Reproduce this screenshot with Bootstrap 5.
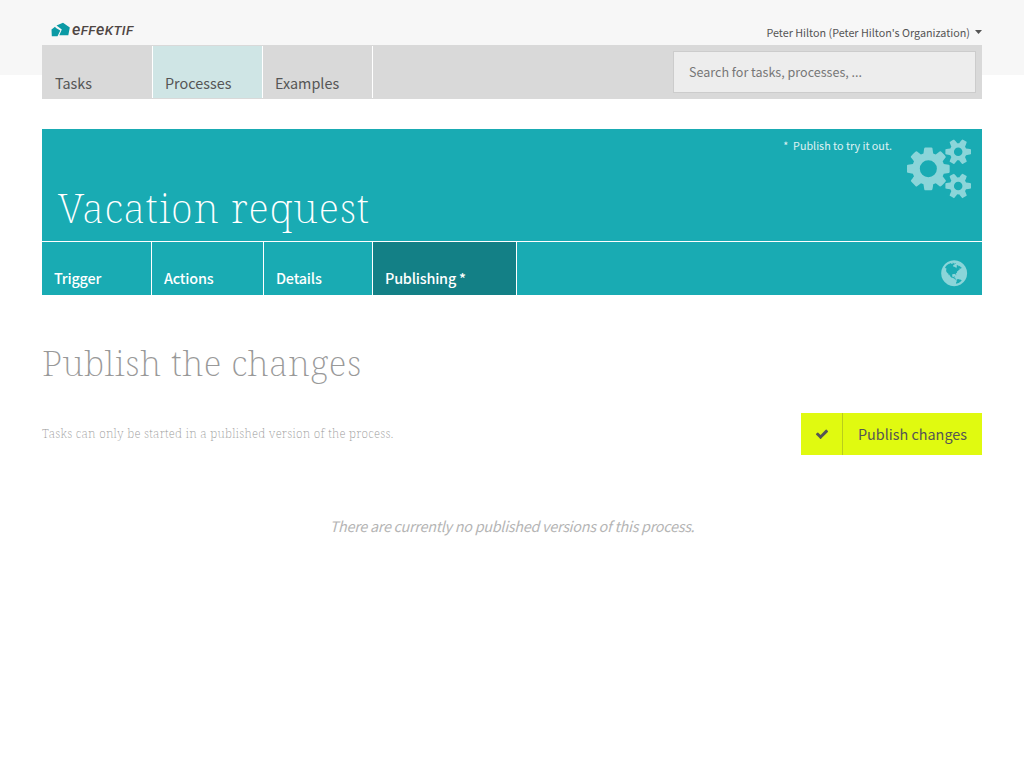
<!DOCTYPE html>
<html lang="en">
<head>
<meta charset="utf-8">
<meta name="viewport" content="width=device-width, initial-scale=1">
<title>Vacation request</title>
<link href="https://cdn.jsdelivr.net/npm/bootstrap@5.3.0/dist/css/bootstrap.min.css" rel="stylesheet">
<style>
body{font-family:"Noto Sans CJK SC",sans-serif;color:#555;background:#fff;overflow:hidden}
.page-top{background:linear-gradient(#f7f7f7 75px,#fff 75px)}
.wrap{width:940px;margin:0 auto}
.masthead{height:45px}
.brand-mark{padding-left:9px;padding-top:22px}
.brand-text{font:italic 500 13.5px/16px Roboto,sans-serif;color:#4f4644;letter-spacing:.42px;padding-left:1px}
.brand-text .low{font-size:16px}
.brand-text .up{text-transform:uppercase}
.user{font-size:10.78px;line-height:16px;padding-top:24px}
.user svg{margin-left:5px}
.main-nav{height:54px;background:#d9d9d9;padding:1px 0}
.main-nav a{width:110px;padding:28px 0 0 12px;border-right:1px solid #fff;font-size:14.4px;line-height:18px;color:#555;text-decoration:none}
.main-nav a:first-child{width:111px;padding-left:13px}
.main-nav a.current{background:#cfe5e5}
.search{width:303px;height:42px;margin:5px 6px 0 0;border:1px solid #ccc;background:#ededed;border-radius:0;padding:0 15px 2px;font-size:12.55px}
.search::placeholder{color:#777}
.banner{margin-top:30px;background:#19abb3;color:#fff}
.banner-head{height:112px}
.slab{font-family:"Noto Serif",Roboto,serif;font-weight:200;white-space:nowrap}
.banner h1{font-size:40px;letter-spacing:.92px;line-height:50px;margin:0;padding:54px 0 0 16px;font-weight:200}
.hint{font-size:10.75px;line-height:16px;padding-top:9px;opacity:.85}
.gears{margin:10px 11px 0 15px}
.tabs{height:54px;border-top:1px solid #fff}
.tabs a{width:110px;border-right:1px solid #fff;padding:27px 0 0 12px;font-size:14.4px;letter-spacing:-.2px;line-height:18px;font-weight:500;color:#fff;text-decoration:none}
.tabs a.tab-actions{width:112px}
.tabs a.tab-details{width:109px}
.tabs a.current{width:144px;background:#138086}
.globe{margin:16px 13px 0 auto}
h2.slab{font-size:35px;letter-spacing:.45px;line-height:46px;color:#999;margin:45px 0 27px}
.note{font-size:12px;letter-spacing:.24px;line-height:18px;color:#999}
.publish{width:181px;height:42px;background:#e0fa10;border:0;color:#555;padding:0;font-size:14.4px}
.publish .tick{width:42px;height:42px;border-right:1px solid #b9cd1c}
.empty{margin-top:61px;font-size:14.4px;letter-spacing:-.28px;line-height:20px;font-style:italic;color:#b5b5b5}
</style>
</head>
<body>
<div class="page-top">
 <div class="wrap">
  <header class="masthead d-flex justify-content-between">
   <div class="brand-mark d-flex align-items-start">
    <svg width="20" height="15" viewBox="0 0 20 15"><path fill="#0b9aa5" d="M.5 7.500 4 4.800 5 6l4.300 2.500L6.500 14.300H.8zM5.500 3.500 12 .700 18.800 5.500 17.300 13.300H8.300L10.800 7.600z"/></svg>
    <span class="brand-text"><span class="low">e</span><span class="up">ff</span><span class="low">e</span><span class="up">ktif</span></span>
   </div>
   <div class="user d-flex align-items-center align-self-start"><span>Peter Hilton (Peter Hilton's Organization)</span><svg width="7" height="4"><path fill="#555" d="M0 0h7L3.500 4z"/></svg></div>
  </header>
  <nav class="main-nav d-flex">
   <a href="#">Tasks</a><a href="#" class="current">Processes</a><a href="#">Examples</a>
   <input class="search form-control ms-auto" placeholder="Search for tasks, processes, ...">
  </nav>
 </div>
</div>
<main class="wrap">
 <section class="banner">
  <div class="banner-head d-flex">
   <h1 class="slab me-auto">Vacation request</h1>
   <div class="hint">*&nbsp; Publish to try it out.</div>
   <svg class="gears" width="64" height="59.7" viewBox="0 0 1920 1792"><path fill="#8bd5d9" d="M896 896q0-106-75-181t-181-75-181 75-75 181 75 181 181 75 181-75 75-181zm768 512q0-52-38-90t-90-38-90 38-38 90q0 53 37.500 90.500t90.500 37.500 90.500-37.500 37.500-90.500zm0-1024q0-52-38-90t-90-38-90 38-38 90q0 53 37.500 90.500t90.500 37.500 90.500-37.500 37.500-90.500zm-384 421v185q0 10-7 19.500t-16 10.500l-155 24q-11 35-32 76 34 48 90 115 7 11 7 20 0 12-7 19-23 30-82.500 89.500t-78.500 59.500q-11 0-21-7l-115-90q-37 19-77 31-11 108-23 155-7 24-30 24h-186q-11 0-20-7.500t-10-17.500l-23-153q-34-10-75-31l-118 89q-7 7-20 7-11 0-21-8-144-133-144-160 0-9 7-19 10-14 41-53t47-61q-23-44-35-82l-152-24q-10-1-17-9.500t-7-19.500v-185q0-10 7-19.500t16-10.500l155-24q11-35 32-76-34-48-90-115-7-11-7-20 0-12 7-20 22-30 82-89t79-59q11 0 21 7l115 90q34-18 77-32 11-108 23-154 7-24 30-24h186q11 0 20 7.500t10 17.500l23 153q34 10 75 31l118-89q8-7 20-7 11 0 21 8 144 133 144 160 0 8-7 19-12 16-42 54t-45 60q23 48 34 82l152 23q10 2 17 10.500t7 19.500zm640 533v140q0 16-149 31-12 27-30 52 51 113 51 138 0 4-4 7-122 71-124 71-8 0-46-47t-52-68q-20 2-30 2t-30-2q-14 21-52 68t-46 47q-2 0-124-71-4-3-4-7 0-25 51-138-18-25-30-52-149-15-149-31v-140q0-16 149-31 13-29 30-52-51-113-51-138 0-4 4-7 4-2 35-20t59-34 30-16q8 0 46 46.500t52 67.500q20-2 30-2t30 2q51-71 92-112l6-2q4 0 124 70 4 3 4 7 0 25-51 138 17 23 30 52 149 15 149 31zm0-1024v140q0 16-149 31-12 27-30 52 51 113 51 138 0 4-4 7-122 71-124 71-8 0-46-47t-52-68q-20 2-30 2t-30-2q-14 21-52 68t-46 47q-2 0-124-71-4-3-4-7 0-25 51-138-18-25-30-52-149-15-149-31v-140q0-16 149-31 13-29 30-52-51-113-51-138 0-4 4-7 4-2 35-20t59-34 30-16q8 0 46 46.500t52 67.500q20-2 30-2t30 2q51-71 92-112l6-2q4 0 124 70 4 3 4 7 0 25-51 138 17 23 30 52 149 15 149 31z"/></svg>
  </div>
  <nav class="tabs d-flex">
   <a href="#">Trigger</a><a href="#" class="tab-actions">Actions</a><a href="#" class="tab-details">Details</a><a href="#" class="current">Publishing *</a>
   <svg class="globe" width="30.3" height="30.3" viewBox="0 0 1792 1792"><path fill="#8bd5d9" d="M896 128q209 0 385.500 103t279.500 279.500 103 385.500-103 385.500-279.500 279.500-385.500 103-385.500-103-279.500-279.500-103-385.500 103-385.500 279.500-279.500 385.500-103zm274 521q-2 1-9.500 9.500t-13.500 9.500q2 0 4.500-5t5-11 3.500-7q6-7 22-15 14-6 52-12 34-8 51 11-2-2 9.500-13t14.500-12q3-2 15-4.500t15-7.500l2-22q-12 1-17.500-7t-6.500-21q0 2-6 8 0-7-4.500-8t-11.500 1-9 1q-10-3-15-7.500t-8-16.500-4-15q-2-5-9.500-11t-9.500-10q-1-2-2.500-5.500t-3-6.500-4-5.500-5.500-2.500-7 5-7.500 10-4.500 5q-3-2-6-1.500t-4.500 1-4.500 3-5 3.500q-3 2-8.500 3t-8.500 2q15-5-1-11-10-4-16-3 9-4 7.500-12t-8.500-14h5q-1-4-8.500-8.500t-17.500-8.500-13-6q-8-5-34-9.500t-33-.5q-5 6-4.500 10.500t4 14 3.500 12.500q1 6-5.500 13t-6.500 12q0 7 14 15.500t10 21.500q-3 8-16 16t-16 12q-5 8-1.500 18.500t10.500 16.500q2 2 1.500 4t-3.500 4.500-5.500 4-6.500 3.500l-3 2q-11 5-20.500-6t-13.500-26q-7-25-16-30-23-8-29 1-5-13-41-26-25-9-58-4 6-1 0-15-7-15-19-12 3-6 4-17.500t1-13.500q3-13 12-23 1-1 7-8.500t9.500-13.500.5-6q35 4 50-11 5-5 11.500-17t10.500-17q9-6 14-5.500t14.500 5.500 14.500 5q14 1 15.500-11t-7.500-20q12 1 3-17-4-7-8-9-12-4-27 5-8 4 2 8-1-1-9.500 10.500t-16.500 17.500-16-5q-1-1-5.500-13.500t-9.500-13.500q-8 0-16 15 3-8-11-15t-24-8q19-12-8-27-7-4-20.500-5t-19.500 4q-5 7-5.500 11.500t5 8 10.500 5.500 11.500 4 8.500 3q14 10 8 14-2 1-8.500 3.500t-11.500 4.500-6 4q-3 4 0 14t-2 14q-5-5-9-17.500t-7-16.500q7 9-25 6l-10-1q-4 0-16 2t-20.500 1-13.500-8q-4-8 0-20 1-4 4-2-4-3-11-9.500t-10-8.500q-46 15-94 41 6 1 12-1 5-2 13-6.500t10-5.500q34-14 42-7l5-5q14 16 20 25-7-4-30-1-20 6-22 12 7 12 5 18-4-3-11.500-10t-14.500-11-15-5q-16 0-22 1-146 80-235 222 7 7 12 8 4 1 5 9t2.500 11 11.500-3q9 8 3 19 1-1 44 27 19 17 21 21 3 11-10 18-1-2-9-9t-9-4q-3 5 .5 18.500t10.500 12.500q-7 0-9.500 16t-2.500 35.500-1 23.500l2 1q-3 12 5.500 34.500t21.500 19.500q-13 3 20 43 6 8 8 9 3 2 12 7.500t15 10 10 10.500q4 5 10 22.500t14 23.500q-2 6 9.500 20t10.500 23q-1 0-2.500 1t-2.500 1q3 7 15.500 14t15.500 13q1 3 2 10t3 11 8 2q2-20-24-62-15-25-17-29-3-5-5.500-15.500t-4.500-14.500q2 0 6 1.500t8.500 3.500 7.500 4 2 3q-3 7 2 17.500t12 18.500 17 19 12 13q6 6 14 19.500t0 13.500q9 0 20 10t17 20q5 8 8 26t5 24q2 7 8.500 13.500t12.500 9.500l16 8 13 7q5 2 18.500 10.500t21.500 11.500q10 4 16 4t14.500-2.500 13.500-3.500q15-2 29 15t21 21q36 19 55 11-2 1 .5 7.500t8 15.500 9 14.500 5.500 8.500q5 6 18 15t18 15q6-4 7-9-3 8 7 20t18 10q14-3 14-32-31 15-49-18 0-1-2.500-5.500t-4-8.500-2.500-8.500 0-7.500 5-3q9 0 10-3.500t-2-12.500-4-13q-1-8-11-20t-12-15q-5 9-16 8t-16-9q0 1-1.500 5.500t-1.500 6.500q-13 0-15-1 1-3 2.500-17.500t3.500-22.500q1-4 5.500-12t7.500-14.500 4-12.500-4.500-9.500-17.500-2.500q-19 1-26 20-1 3-3 10.500t-5 11.500-9 7q-7 3-24 2t-24-5q-13-8-22.500-29t-9.500-37q0-10 2.500-26.500t3-25-5.500-24.500q3-2 9-9.500t10-10.500q2-1 4.500-1.500t4.500 0 4-1.500 3-6q-1-1-4-3-3-3-4-3 7 3 28.500-1.500t27.500 1.500q15 11 22-2 0-1-2.500-9.500t-.5-13.500q5 27 29 9 3 3 15.500 5t17.500 5q3 2 7 5.500t5.500 4.500 5-.5 8.500-6.500q10 14 12 24 11 40 19 44 7 3 11 2t4.500-9.500 0-14-1.500-12.500l-1-8v-18l-1-8q-15-3-18.500-12t1.500-18.500 15-18.500q1-1 8-3.500t15.500-6.500 12.500-8q21-19 15-35 7 0 11-9-1 0-5-3t-7.500-5-4.500-2q9-5 2-16 5-3 7.500-11t7.500-10q9 12 21 2 8-8 1-16 5-7 20.500-10.500t18.500-9.500q7 2 8-2t1-12 3-12q4-5 15-9t13-5l17-11q3-4 0-4 18 2 31-11 10-11-6-20 3-6-3-9.500t-15-5.500q3-1 11.500-.5t10.500-1.500q15-10-7-16-17-5-43 12zm-163 877q206-36 351-189-3-3-12.500-4.500t-12.500-3.500q-18-7-24-8 1-7-2.500-13t-8-9-12.500-8-11-7q-2-2-7-6t-7-5.500-7.500-4.500-8.500-2-10 1l-3 1q-3 1-5.500 2.500t-5.500 3-4 3 0 2.500q-21-17-36-22-5-1-11-5.500t-10.500-7-10-1.500-11.500 7q-5 5-6 15t-2 13q-7-5 0-17.500t2-18.500q-3-6-10.500-4.500t-12 4.500-11.500 8.500-9 6.500-8.500 5.500-8.500 7.500q-3 4-6 12t-5 11q-2-4-11.500-6.500t-9.500-5.500q2 10 4 35t5 38q7 31-12 48-27 25-29 40-4 22 12 26 0 7-8 20.500t-7 21.500q0 6 2 16z"/></svg>
  </nav>
 </section>
 <h2 class="slab">Publish the changes</h2>
 <div class="d-flex justify-content-between align-items-center">
  <div class="note slab">Tasks can only be started in a published version of the process.</div>
  <button class="publish btn rounded-0 d-flex align-items-center"><span class="tick d-flex align-items-center justify-content-center"><svg width="14" height="14" viewBox="0 0 1792 1792"><path fill="#555" d="M1671 566q0 40-28 68l-724 724-136 136q-28 28-68 28t-68-28l-136-136-362-362q-28-28-28-68t28-68l136-136q28-28 68-28t68 28l294 295 656-657q28-28 68-28t68 28l136 136q28 28 28 68z"/></svg></span><span class="flex-fill">Publish changes</span></button>
 </div>
 <p class="empty text-center">There are currently no published versions of this process.</p>
</main>
<script src="https://cdn.jsdelivr.net/npm/bootstrap@5.3.0/dist/js/bootstrap.bundle.min.js"></script>
</body>
</html>
